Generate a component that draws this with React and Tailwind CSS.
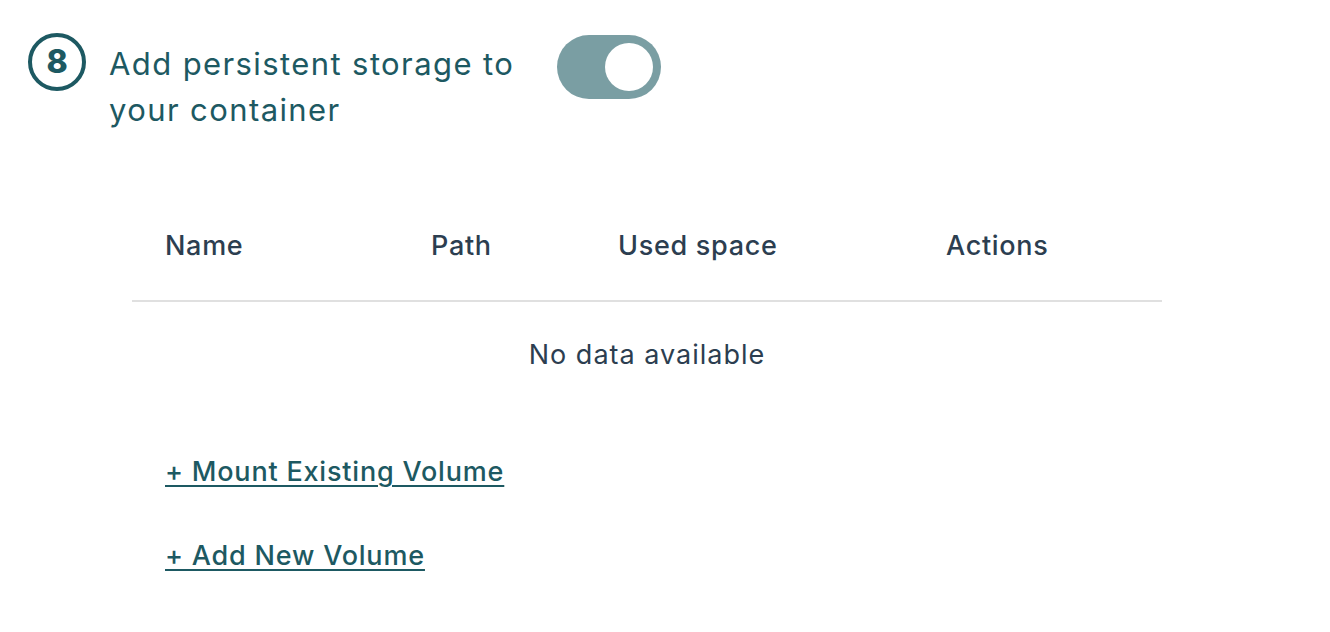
export default function App() {
  return (
    <div className="w-[1330px] h-[632px] bg-white" style={{ fontFamily: "Inter, 'Noto Sans', sans-serif" }}>
      <div className="flex items-start pl-[28px] pt-[33px]">
        <div className="w-[58px] h-[58px] rounded-full border-[4px] border-[#1d5962] flex items-center justify-center text-[#1d5962] text-[32px] font-extrabold leading-none">
          8
        </div>
        <div className="ml-[23px] w-[430px] text-[31px] tracking-[1.4px] leading-[46px] text-[#1d5962] mt-[8px]">
          Add persistent storage to your container
        </div>
        <div className="ml-[18px] mt-[2px] w-[104px] h-[64px] rounded-full bg-[#7a9ea3] flex items-center justify-end pr-[8px]">
          <div className="w-[48px] h-[48px] rounded-full bg-white"></div>
        </div>
      </div>
      <div className="ml-[132px] w-[1030px] mt-[97px]">
        <div className="flex pb-[38px] border-b-2 border-[#e0e0e0] text-[27px] leading-[32px] tracking-[0.7px] font-medium text-[#2c3e50]">
          <div className="w-[266px] pl-[33px]">Name</div>
          <div className="w-[187px] pl-[33px]">Path</div>
          <div className="w-[328px] pl-[33px]">Used space</div>
          <div className="pl-[33px]">Actions</div>
        </div>
        <div className="pt-[37px] text-center text-[27px] leading-[32px] tracking-[1px] text-[#2c3e50]">
          No data available
        </div>
      </div>
      <div className="ml-[165px] flex flex-col items-start gap-[52px] mt-[85px] text-[27px] leading-[32px] tracking-[0.8px] font-medium text-[#1d5962] underline decoration-2 underline-offset-[4px]">
        <a>+ Mount Existing Volume</a>
        <a>+ Add New Volume</a>
      </div>
    </div>
  );
}
